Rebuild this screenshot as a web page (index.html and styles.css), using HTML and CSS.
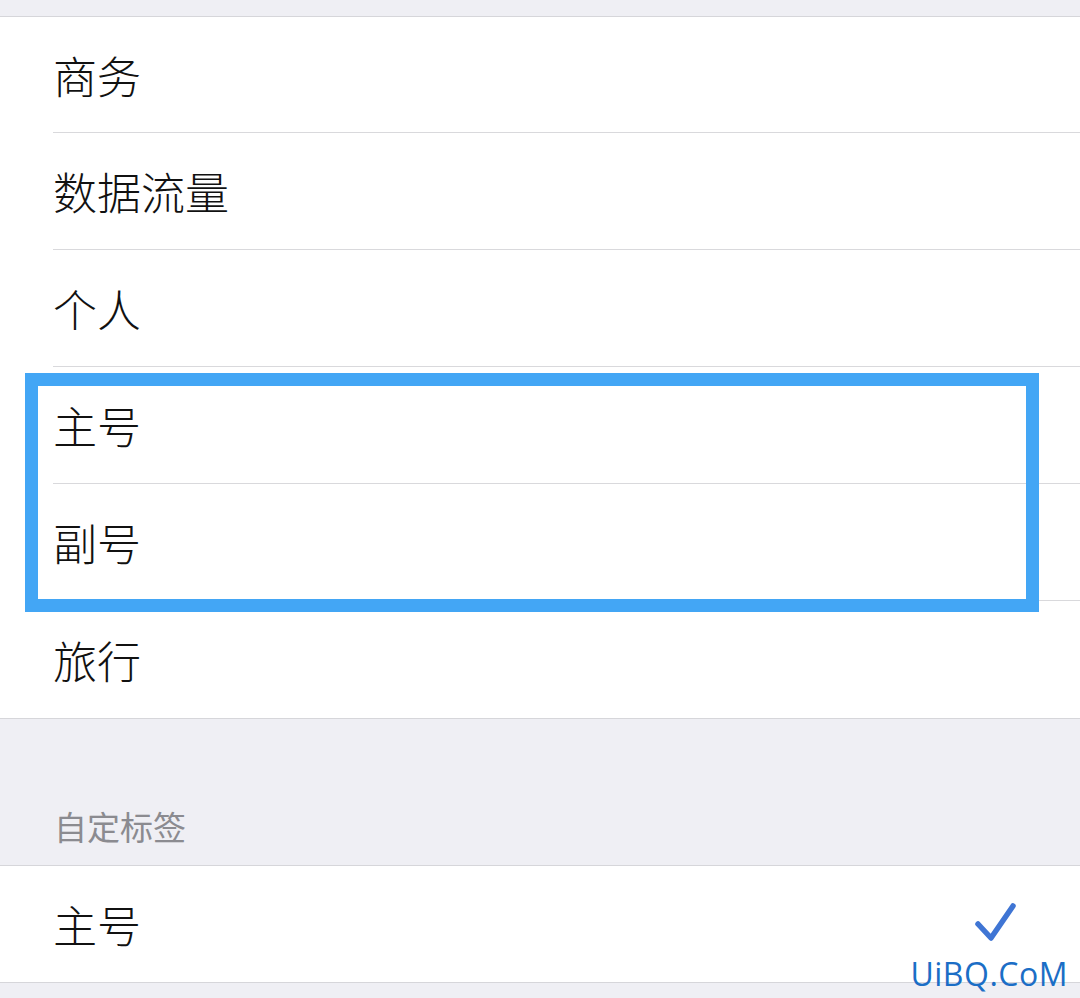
FILE: index.html
```html
<!DOCTYPE html>
<html lang="zh-CN">
<head>
    <meta charset="UTF-8">
    <meta name="viewport" content="width=device-width, initial-scale=1.0">
    <title>标签</title>
    <link rel="stylesheet" href="styles.css">
</head>
<body>
    <div class="screen">
        <div class="band band-top"></div>

        <div class="group">
            <ul class="list">
                <li class="row">商务</li>
                <li class="row">数据流量</li>
                <li class="row">个人</li>
                <li class="row">主号</li>
                <li class="row">副号</li>
                <li class="row">旅行</li>
            </ul>
            <!-- highlight around 主号 / 副号 -->
            <div class="highlight"></div>
        </div>

        <div class="section-head">自定标签</div>

        <ul class="list list-custom">
            <li class="row row-check">
                <span>主号</span>
                <svg class="check" width="44" height="44" viewBox="0 0 44 44">
                    <path d="M4 22 L17 36 L39 4" fill="none" stroke="#3f75d4" stroke-width="5.5" stroke-linecap="round" stroke-linejoin="round"/>
                </svg>
            </li>
        </ul>

        <div class="band band-bottom"></div>

        <div class="watermark">UiBQ.CoM</div>
    </div>
</body>
</html>
```

FILE: styles.css
```css
body {
    margin: 0;
    padding: 0;
    background-color: #efeff4;
    font-family: "Noto Sans CJK SC", "Noto Sans", sans-serif;
    color: #111;
}

.screen {
    position: relative;
    width: 1080px;
    height: 998px;
    overflow: hidden;
    background-color: #efeff4;
}

.band-top {
    height: 16px;
}

.group {
    position: relative;
}

.list {
    list-style: none;
    margin: 0;
    padding: 0;
    background-color: #ffffff;
    border-top: 1px solid #d6d6da;
    border-bottom: 1px solid #d6d6da;
}

.row {
    height: 117px;
    margin-left: 53px;
    display: flex;
    align-items: center;
    justify-content: space-between;
    font-size: 44px;
    font-weight: 300;
    line-height: 1;
    border-bottom: 1px solid #d9d9dc;
    box-sizing: border-box;
}

.row:first-child {
    height: 116px;
}

.row:last-child {
    border-bottom: none;
}

.highlight {
    position: absolute;
    left: 25px;
    top: 357px;
    width: 988px;
    height: 213px;
    border: 13px solid #43a6f5;
}

.section-head {
    height: 146px;
    box-sizing: border-box;
    padding: 0 0 0 54px;
    display: flex;
    align-items: flex-end;
    padding-bottom: 22px;
    font-size: 33px;
    line-height: 1;
    color: #8b8b90;
}

.list-custom .row {
    height: 116px;
}

.check {
    margin-right: 62px;
    margin-top: 0;
}

.watermark {
    position: absolute;
    right: 12px;
    bottom: 8px;
    font-family: "Open Sans", "DejaVu Sans", sans-serif;
    font-size: 32px;
    line-height: 1;
    color: #1b6ec6;
    letter-spacing: 0.5px;
}
```
